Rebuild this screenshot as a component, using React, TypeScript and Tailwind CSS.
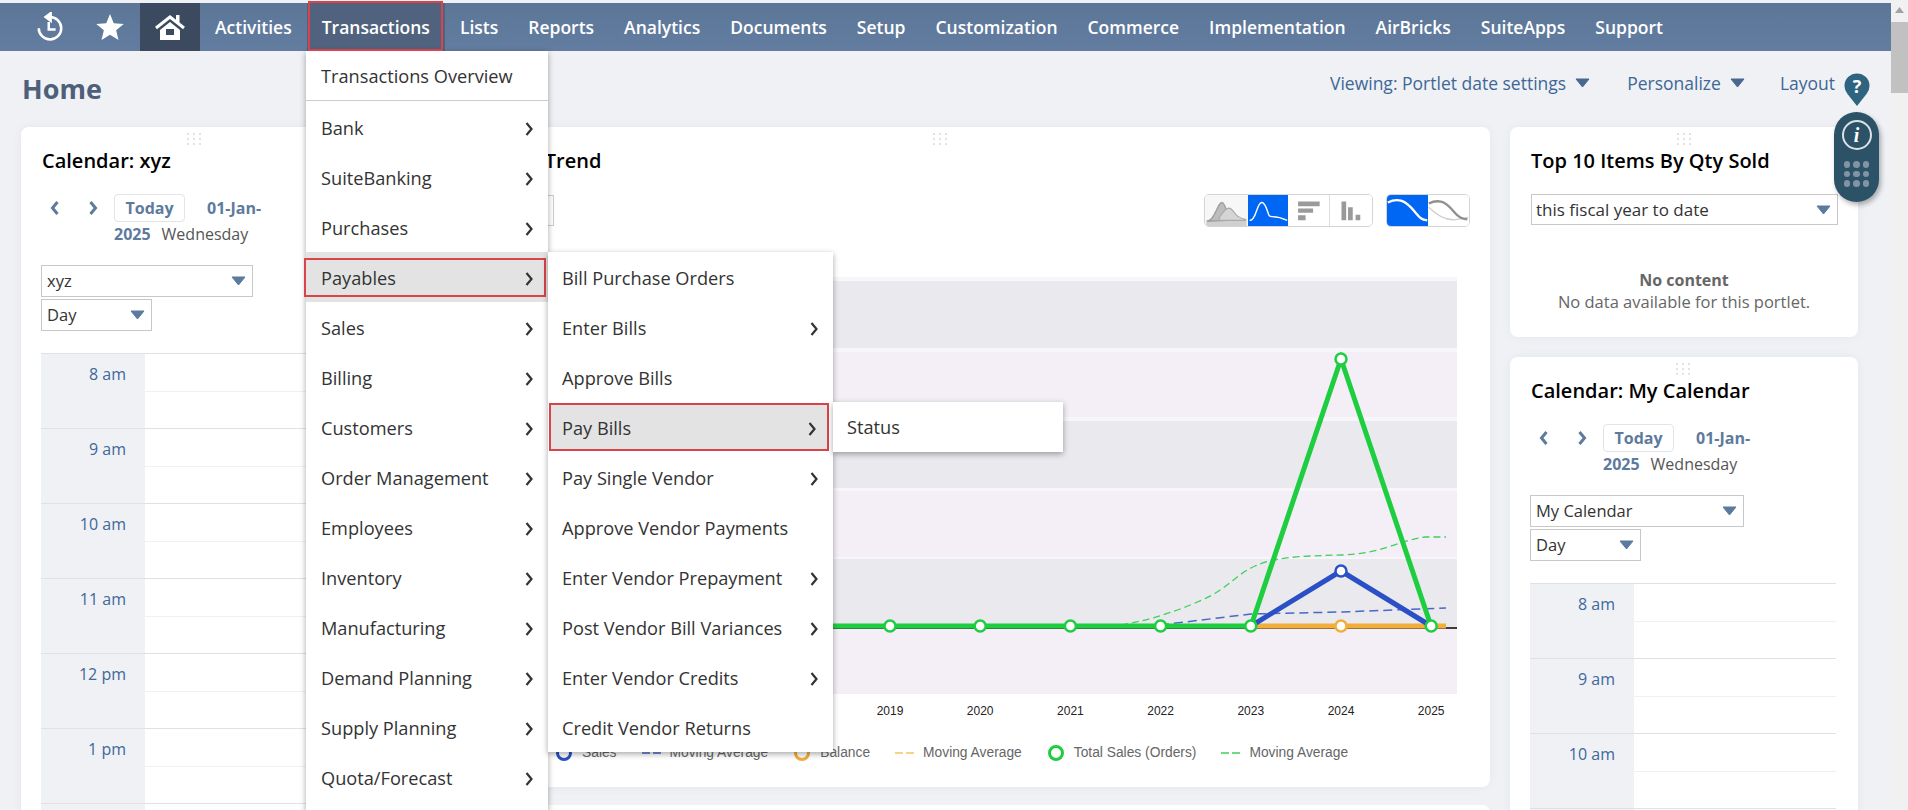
const navItems = ["Activities", "Transactions", "Lists", "Reports", "Analytics", "Documents", "Setup", "Customization", "Commerce", "Implementation", "AirBricks", "SuiteApps", "Support"];

const mainMenu = ["Bank", "SuiteBanking", "Purchases", "Payables", "Sales", "Billing", "Customers", "Order Management", "Employees", "Inventory", "Manufacturing", "Demand Planning", "Supply Planning", "Quota/Forecast"];

const payablesMenu: [string, boolean][] = [
  ["Bill Purchase Orders", false],
  ["Enter Bills", true],
  ["Approve Bills", false],
  ["Pay Bills", true],
  ["Pay Single Vendor", true],
  ["Approve Vendor Payments", false],
  ["Enter Vendor Prepayment", true],
  ["Post Vendor Bill Variances", true],
  ["Enter Vendor Credits", true],
  ["Credit Vendor Returns", false],
];

const years = [2019, 2020, 2021, 2022, 2023, 2024, 2025];

function Chevron({ left = false, weight = 2.2, className = "" }: { left?: boolean; weight?: number; className?: string }) {
  return (
    <svg width="10" height="16" viewBox="0 0 10 16" className={className}>
      <path d={left ? "M7.5 2 2.5 8l5 6" : "M2.5 2l5 6-5 6"} fill="none" stroke="currentColor" strokeWidth={weight} />
    </svg>
  );
}

function Caret({ className = "" }: { className?: string }) {
  return (
    <svg width="15" height="10" viewBox="0 0 15 10" className={className}>
      <path d="M1 1h13L7.5 9z" fill="currentColor" stroke="currentColor" strokeLinejoin="round" />
    </svg>
  );
}

function DragHandle() {
  return (
    <div className="flex h-[24px] items-center justify-center">
      <div className="grid grid-cols-3 gap-x-[4px] gap-y-[3px]">
        {Array.from({ length: 9 }).map((_, i) => (
          <span key={i} className="h-[2px] w-[2px] bg-[#e2e2e2]" />
        ))}
      </div>
    </div>
  );
}

function SelectBox({ label, width }: { label: string; width: string }) {
  return (
    <div className={`flex h-[32px] items-center justify-between border border-[#c8c8c8] bg-white pl-[5px] pr-[6px] text-[16.5px] text-[#333] ${width}`}>
      <span>{label}</span>
      <Caret className="text-[#5b7aa0]" />
    </div>
  );
}

function CalendarCard({ title, select, selectWidth, hours }: { title: string; select: string; selectWidth: string; hours: string[] }) {
  return (
    <div className="h-[700px] w-[348px] rounded-lg bg-white pl-5 pr-[22px] shadow-[0_0_8px_rgba(100,110,130,0.08)]">
      <DragHandle />
      <h2 className="h-[20px] pl-px text-[20px] font-semibold leading-[20px] text-black">{title}</h2>
      <div className="mt-[23px] flex">
        <div className="flex h-[28px] w-[73px] items-center text-[#5e7a9d]">
          <Chevron left weight={3} className="ml-[9px]" />
          <Chevron weight={3} className="ml-[28px]" />
        </div>
        <div className="w-[200px] text-[16px] leading-[28px]">
          <span className="inline-flex h-[28px] w-[71px] items-center justify-center rounded border border-[#e2e4e8] font-bold text-[#5e7a9d]">Today</span>
          <span className="ml-[22px] font-bold text-[#5e7a9d]">01-Jan-</span>
          <div className="-mt-[2px]">
            <span className="font-bold text-[#5e7a9d]">2025</span>
            <span className="ml-[11px] text-[#555]">Wednesday</span>
          </div>
        </div>
      </div>
      <div className="mt-[17px] flex flex-col gap-[2px]">
        <SelectBox label={select} width={selectWidth} />
        <SelectBox label="Day" width="w-[111px]" />
      </div>
      <div className="mt-[22px]">
        {[...hours, ""].map((h) => (
          <div key={h} className="flex h-[75px] border-t border-[#dfe1e5]">
            <div className="w-[104px] bg-[#eff1f5] pr-[19px] pt-[9px] text-right text-[16px] leading-[22px] text-[#40689b]">{h}</div>
            <div className="flex-1">
              <div className="h-[38px] border-b border-[#f0f1f3]" />
            </div>
          </div>
        ))}
      </div>
    </div>
  );
}

function ChartTypeIcons() {
  return (
    <div className="flex items-center gap-[13px]">
      <div className="flex h-[33px] w-[169px] overflow-hidden rounded-[5px] border border-[#d4d4d4]">
        <svg viewBox="0 0 43 33" className="h-full w-[43px] bg-[#f7f7f7]">
          <path d="M0 33v-6c8-3 12-4 18-2s15 2 25 2v6z" fill="#d0d0d0" />
          <path d="M1 28c5-1 7-6 10-12s4-8 6-8 4 6 6 12 0 7 0 7z" fill="#bdbdbd" stroke="#a0a0a0" strokeWidth="1.500" />
          <path d="M14 24c3-4 6-10 10-10s6 6 9 8 5 4 9 4v1H14z" fill="#d5d5d5" stroke="#aaa" strokeWidth="1.200" />
        </svg>
        <svg viewBox="0 0 41 33" className="h-full w-[40px] bg-[#0067f4]">
          <path d="M1 27c3 0 5-3 7-9s4-10 6-10 4 3 6 9 2 6 5 6c6 0 10 1 16 4" fill="none" stroke="#fff" strokeWidth="1.500" />
        </svg>
        <svg viewBox="0 0 43 33" className="h-full w-[43px] border-r border-[#ddd] bg-white">
          <path d="M10 7h23v5H10zM10 14.500h16v4.500H10zM10 21.500h8V27h-8z" fill="#9a9a9a" />
        </svg>
        <svg viewBox="0 0 42 33" className="h-full w-[42px] bg-white">
          <path d="M11 7h5v20h-5zM18 13h5v14h-5zM26 21h5v6h-5z" fill="#9a9a9a" />
        </svg>
      </div>
      <div className="flex h-[33px] w-[84px] overflow-hidden rounded-[5px] border border-[#d4d4d4]">
        <svg viewBox="0 0 42 33" className="h-full w-[42px] bg-[#0067f4]">
          <path d="M0 8c4-2 10-3 14-2s10 6 15 12 6 8 13 9" fill="none" stroke="#fff" strokeWidth="2.500" />
        </svg>
        <svg viewBox="0 0 42 33" className="h-full w-[42px] bg-white">
          <path d="M0 13c8 8 18 15 30 13s8-1 12-2" fill="none" stroke="#d0d0d0" strokeWidth="1.500" />
          <path d="M0 9c4-2 8-3 13-2s9 5 14 11 8 7 14 8" fill="none" stroke="#909090" strokeWidth="2.500" />
        </svg>
      </div>
    </div>
  );
}

function Marker({ x, y, color }: { x: number; y: number; color: string }) {
  return <circle cx={x} cy={y} r="5.500" fill="#fff" stroke={color} strokeWidth="2.500" />;
}

function TrendChart() {
  const bands: [number, number, string][] = [
    [281, 67, "#e9e9ee"],
    [352, 65, "#f4eff6"],
    [421, 67, "#e9e9ee"],
    [491, 66, "#f4eff6"],
    [559, 68, "#e9e9ee"],
    [628, 66, "#f4eff6"],
  ];
  const yearX = (i: number) => 890 + i * 90.2;
  return (
    <svg viewBox="389 270 1101 455" className="mt-[43px] h-[455px] w-[1101px]">
      <rect x="409" y="277" width="1048" height="417" fill="#f7f7fb" />
      {bands.map(([y, h, fill]) => (
        <rect key={y} x="409" y={y} width="1048" height={h} fill={fill} />
      ))}
      <line x1="560" y1="628" x2="1457" y2="628" stroke="#000" strokeWidth="1.500" />
      <path d="M1121 625C1150 620 1175 612 1202 600S1235 575 1255 566 1300 556 1341 555 1400 540 1425 537L1446 537" fill="none" stroke="#3fcf5c" strokeWidth="1.300" strokeDasharray="7 4" />
      <path d="M1160 625l91-11 90-2 105-4" fill="none" stroke="#4a66c8" strokeWidth="1.500" strokeDasharray="9 5" />
      <line x1="1251" y1="626" x2="1446" y2="626" stroke="#f2ae3a" strokeWidth="5" />
      <path d="M1251 626l90-55 90 55" fill="none" stroke="#2b50c6" strokeWidth="5" />
      <path d="M560 626h691l90-267 90 267" fill="none" stroke="#1fce40" strokeWidth="5" />
      <Marker x={1341} y={571} color="#2b50c6" />
      <Marker x={1341} y={626} color="#f2ae3a" />
      <Marker x={1341} y={359} color="#1fce40" />
      {years.map((y, i) => (
        <g key={y}>
          {i !== 5 && <Marker x={yearX(i)} y={626} color="#1fce40" />}
          <text x={yearX(i)} y={715} textAnchor="middle" fontSize="12" fill="#222" fontFamily="Liberation Sans, sans-serif">{y}</text>
        </g>
      ))}
    </svg>
  );
}

function LegendRing({ color }: { color: string }) {
  return <span className={`mx-px h-[16px] w-[16px] rounded-full border-[3.500px] bg-white ${color}`} />;
}

function LegendDash({ color }: { color: string }) {
  return (
    <svg width="19" height="4">
      <path d="M0 2h19" stroke={color} strokeWidth="1.500" strokeDasharray="8 3" />
    </svg>
  );
}

function Legend() {
  const entry = "flex items-center gap-[9px]";
  return (
    <div className="ml-[166px] mt-[18px] flex h-[20px] items-center gap-[25px] font-['Liberation_Sans',sans-serif] text-[13.800px] text-[#666]">
      <div className={entry}><LegendRing color="border-[#2b50c6]" />Sales</div>
      <div className={entry}><LegendDash color="#4a66c8" />Moving Average</div>
      <div className={entry}><LegendRing color="border-[#f2ae3a]" />Balance</div>
      <div className={entry}><LegendDash color="#f2c560" />Moving Average</div>
      <div className={entry}><LegendRing color="border-[#1fce40]" />Total Sales (Orders)</div>
      <div className={entry}><LegendDash color="#3fcf5c" />Moving Average</div>
    </div>
  );
}

function MenuRow({ label, arrow = true, inset = "pl-[15px]" }: { label: string; arrow?: boolean; inset?: string }) {
  return (
    <div className={`flex h-[50px] items-center justify-between pr-[14px] pt-[3px] text-[18.200px] text-[#333] ${inset}`}>
      <span>{label}</span>
      {arrow && <Chevron />}
    </div>
  );
}

function App() {
  return (
    <div className="relative flex h-[810px] w-[1908px] overflow-hidden bg-[#eff1f5] font-['Open_Sans',sans-serif]">
      <div className="w-[1891px]">
        {/* top nav */}
        <div className="mt-[3px] flex h-[48px] bg-gradient-to-b from-[#5c7698] to-[#637da0] pl-[20px] text-white">
          <div className="flex w-[60px] items-center justify-center">
            <svg width="30" height="30" viewBox="0 0 24 24" fill="none" stroke="#fff" strokeWidth="2">
              <path d="M12 4a9 9 0 1 1-9 9" />
              <path d="M12.500 1 8.500 4l4 3z" fill="#fff" />
              <path d="M11 8v6h5.500" />
            </svg>
          </div>
          <div className="flex w-[60px] items-center justify-center">
            <svg width="30" height="30" viewBox="0 0 24 24" fill="#fff">
              <path d="M12 1.500l3 7.400 8 .6-6.100 5.100 1.900 7.800L12 18.200l-6.800 4.200 1.900-7.800L1 9.500l8-.6z" />
            </svg>
          </div>
          <div className="flex w-[60px] items-center justify-center bg-[#3c4a60]">
            <svg width="30" height="27" viewBox="0 0 30 27" fill="#fff">
              <path d="M21 1h3.500v8L21 6.500z" />
              <path d="M1 14 15 3l14 11" fill="none" stroke="#fff" strokeWidth="3" />
              <path fillRule="evenodd" d="M15 8l10 8v10H5V16zM11 15v6h8v-6z" />
            </svg>
          </div>
          {navItems.map((item) => (
            <div key={item} className={`flex items-center px-[15px] text-[17.500px] font-semibold ${item === "Transactions" ? "bg-[#50627e]" : ""}`}>
              {item}
            </div>
          ))}
        </div>

        {/* page header */}
        <div className="flex h-[76px] items-start justify-between pl-[22px] pr-[56px]">
          <h1 className="mt-[20px] text-[27px] font-bold leading-[36px] text-[#4d5f79]">Home</h1>
          <div className="mt-[21px] flex items-center text-[17.500px] leading-[22px] text-[#3e6795]">
            <span>Viewing: Portlet date settings</span>
            <Caret className="ml-[9px] text-[#48688f]" />
            <span className="ml-[37px]">Personalize</span>
            <Caret className="ml-[9px] text-[#48688f]" />
            <span className="ml-[35px]">Layout</span>
          </div>
        </div>

        {/* portlet columns */}
        <div className="flex gap-5 pl-[21px]">
          <CalendarCard title="Calendar: xyz" select="xyz" selectWidth="w-[212px]" hours={["8 am", "9 am", "10 am", "11 am", "12 pm", "1 pm"]} />
          <div className="flex w-[1101px] flex-col gap-[18px]">
            <div className="h-[660px] rounded-lg bg-white shadow-[0_0_8px_rgba(100,110,130,0.08)]">
              <div className="h-[67px] px-5">
                <DragHandle />
                <h2 className="h-[20px] pl-[19px] text-[20px] font-semibold leading-[20px] text-black">Sales Order Trend</h2>
              </div>
              <div className="flex h-[33px] items-center justify-between px-5">
                <div className="h-[31px] w-[145px] border border-[#ccc]" />
                <ChartTypeIcons />
              </div>
              <TrendChart />
              <Legend />
            </div>
            <div className="h-[60px] rounded-lg bg-white" />
          </div>
          <div className="flex w-[348px] flex-col gap-5">
            <div className="h-[210px] rounded-lg bg-white px-[21px] shadow-[0_0_8px_rgba(100,110,130,0.08)]">
              <DragHandle />
              <h2 className="h-[20px] text-[20px] font-semibold leading-[20px] text-black">Top 10 Items By Qty Sold</h2>
              <div className="mt-[23px] flex h-[31px] w-[307px] items-center justify-between border border-[#c8c8c8] pl-[4px] pr-[6px] text-[17px] text-[#333]">
                <span>this fiscal year to date</span>
                <Caret className="text-[#5b7aa0]" />
              </div>
              <div className="mt-[44px] text-center leading-[22px] text-[#666]">
                <div className="text-[16px] font-bold">No content</div>
                <div className="text-[16.500px]">No data available for this portlet.</div>
              </div>
            </div>
            <CalendarCard title="Calendar: My Calendar" select="My Calendar" selectWidth="w-[214px]" hours={["8 am", "9 am", "10 am"]} />
          </div>
        </div>
      </div>

      {/* scrollbar */}
      <div className="flex w-[17px] flex-col items-center bg-[#f1f1f1] pt-[7px]">
        <svg width="9" height="6"><path d="M4.500 0 9 6H0z" fill="#a3a3a3" /></svg>
        <div className="mt-[9px] h-[71px] w-full bg-[#c1c1c1]" />
      </div>

      {/* open menus */}
      <div className="absolute left-[306px] top-[51px] w-[242px] bg-white pb-[50px] shadow-[0_2px_6px_rgba(0,0,0,0.35)]">
        <div className="flex h-[50px] items-center border-b border-[#ccc] pl-[15px] pt-[2px] text-[18.200px] text-[#333]">Transactions Overview</div>
        <div className="mt-px">
          {mainMenu.map((m) => (
            <div key={m} className={`relative ${m === "Payables" ? "bg-[#e3e3e3]" : ""}`}>
              <MenuRow label={m} />
              {m === "Payables" && <div className="absolute -left-[2px] right-[2px] top-[6px] bottom-[5px] border-2 border-[#d9434a]" />}
            </div>
          ))}
        </div>
      </div>
      <div className="absolute left-[548px] top-[252px] w-[285px] bg-white shadow-[0_2px_6px_rgba(0,0,0,0.35)]">
        {payablesMenu.map(([label, arrow]) =>
          label === "Pay Bills" ? (
            <div key={label} className="flex h-[50px] items-center py-px pl-px pr-[4px]">
              <div className="flex h-full w-full items-center justify-between border-2 border-[#d9434a] bg-[#e3e3e3] pl-[11px] pr-[10px] pt-[3px] text-[18.200px] text-[#333]">
                <span>{label}</span>
                <Chevron />
              </div>
            </div>
          ) : (
            <MenuRow key={label} label={label} arrow={arrow} inset="pl-[14px]" />
          ),
        )}
      </div>
      <div className="absolute left-[833px] top-[402px] flex h-[50px] w-[230px] items-center bg-white pl-[14px] pt-[2px] text-[18.200px] text-[#333] shadow-[0_2px_6px_rgba(0,0,0,0.35)]">Status</div>

      {/* red highlight round the nav item */}
      <div className="absolute left-[308px] top-[1px] h-[50px] w-[135px] border-2 border-[#d9434a]" />

      {/* help pin and side widget */}
      <svg width="26" height="36" viewBox="0 0 26 36" className="absolute left-[1844px] top-[71px]">
        <path d="M13 35 3.500 23A12.500 12.500 0 1 1 22.500 23z" fill="#2f6480" />
        <text x="13" y="22" textAnchor="middle" fontSize="18" fontWeight="700" fill="#fff" fontFamily="Open Sans, sans-serif">?</text>
      </svg>
      <div className="absolute left-[1834px] top-[112px] flex h-[90px] w-[45px] flex-col items-center rounded-full bg-[#2c5268] shadow-[2px_3px_5px_rgba(0,0,0,0.3)]">
        <div className="mt-[8px] flex h-[30px] w-[30px] items-center justify-center rounded-full border-2 border-[#dbe2e7] font-['Liberation_Serif',serif] text-[20px] font-bold italic leading-none text-white">i</div>
        <div className="mt-[11px] grid grid-cols-3 gap-[3px]">
          {Array.from({ length: 9 }).map((_, i) => (
            <span key={i} className="h-[6.500px] w-[6.500px] rounded-full bg-[#8294a3]" />
          ))}
        </div>
      </div>
    </div>
  );
}

export default App;
